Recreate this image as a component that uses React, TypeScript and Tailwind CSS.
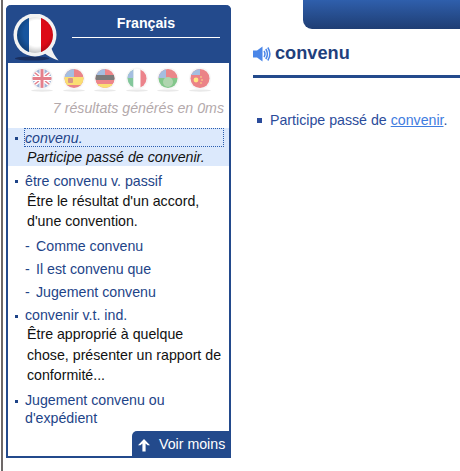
import React from 'react'

const FlagBall = ({ id, children }: { id: string; children: React.ReactNode }) => (
  <svg width="24" height="26" viewBox="0 0 24 26" className="opacity-55 blur-[0.6px]">
    <ellipse cx="12" cy="23.5" rx="11" ry="1.2" fill="#d8d8d8" />
    <clipPath id={id}>
      <circle cx="12" cy="11.5" r="9.5" />
    </clipPath>
    <circle cx="12" cy="11.5" r="11" fill="#f1f1f1" />
    <g clipPath={`url(#${id})`}>{children}</g>
  </svg>
)

const Flags = () => (
  <div className="flex justify-between pl-[22px] pr-[17px] pt-[4px]">
    <FlagBall id="uk">
      <rect width="24" height="24" fill="#5a7ab8" />
      <path d="M0 2 L24 21 M24 2 L0 21" stroke="#fff" strokeWidth="4" />
      <path d="M0 2 L24 21 M24 2 L0 21" stroke="#d0182c" strokeWidth="1.4" />
      <path d="M12 0 V24 M0 11.5 H24" stroke="#fff" strokeWidth="5" />
      <path d="M12 0 V24 M0 11.5 H24" stroke="#d0182c" strokeWidth="3" />
    </FlagBall>
    <FlagBall id="es">
      <rect width="24" height="24" fill="#d92027" />
      <rect x="0" y="0" width="12" height="10" fill="#5a8ac8" />
      <rect y="10" width="24" height="8" fill="#f6c400" />
      <rect x="6" y="11" width="5" height="5" rx="1" fill="#b5402a" />
    </FlagBall>
    <FlagBall id="de">
      <rect width="24" height="24" fill="#e0242b" />
      <rect x="0" y="0" width="12" height="8" fill="#5a8ac8" />
      <rect y="8" width="24" height="5" fill="#111" />
      <rect y="13" width="24" height="4" fill="#e0242b" />
      <rect y="17" width="24" height="7" fill="#f7c600" />
    </FlagBall>
    <FlagBall id="it">
      <rect width="8.5" height="24" fill="#1f9a4a" />
      <rect x="0" y="0" width="8.5" height="11" fill="#5a8ac8" />
      <rect x="8.5" width="7" height="24" fill="#fff" />
      <rect x="15.5" width="9" height="24" fill="#dd1f2d" />
    </FlagBall>
    <FlagBall id="ar">
      <rect width="24" height="11" fill="#d9262c" />
      <rect x="0" y="0" width="10" height="11" fill="#5a8ac8" />
      <rect y="11" width="24" height="13" fill="#1e9a2d" />
      <circle cx="12" cy="15" r="5" fill="#6fb46f" />
    </FlagBall>
    <FlagBall id="cn">
      <rect width="24" height="24" fill="#dc1f26" />
      <rect x="0" y="0" width="12" height="8" fill="#5a8ac8" />
      <circle cx="8" cy="13" r="2.4" fill="#ffd21f" />
      <circle cx="13" cy="10" r="0.8" fill="#ffd21f" />
      <circle cx="14" cy="13" r="0.8" fill="#ffd21f" />
      <circle cx="13" cy="16" r="0.8" fill="#ffd21f" />
    </FlagBall>
  </div>
)

const Bubble = () => (
  <svg width="48" height="50" viewBox="0 0 48 50" className="shrink-0">
    <defs>
      <clipPath id="fr">
        <circle cx="23" cy="21" r="18" />
      </clipPath>
      <radialGradient id="shade" cx="0.55" cy="0.45" r="0.6">
        <stop offset="0.6" stopColor="#000" stopOpacity="0" />
        <stop offset="1" stopColor="#000" stopOpacity="0.28" />
      </radialGradient>
    </defs>
    <ellipse cx="20" cy="44.5" rx="17" ry="2" fill="#1a2f5e" />
    <path d="M31 38 Q38 44 46.5 46.5 Q41 40 39 33 Z" fill="#f2f2f2" />
    <circle cx="23" cy="21" r="21.5" fill="#f2f2f2" />
    <g clipPath="url(#fr)">
      <rect x="4" y="2" width="13" height="38" fill="#17559e" />
      <rect x="17" y="2" width="12" height="38" fill="#fff" />
      <rect x="29" y="2" width="13" height="38" fill="#dd0a17" />
      <circle cx="23" cy="21" r="18" fill="url(#shade)" />
    </g>
  </svg>
)

const Sidebar = () => (
  <aside
    className="relative mt-[5px] ml-[3px] w-[225px] h-[453px] shrink-0 rounded-t-[5px] border-x-2 border-b-2 border-[#234a8c] bg-white"
  >
    <header className="flex h-[58px] -mx-[2px] rounded-t-[5px] bg-[#234a8c] pl-[6px] pt-[9px]">
      <Bubble />
      <div className="ml-[12px] w-[148px]">
        <h2 className="mt-[-2px] h-[22px] text-center text-[14.2px] leading-[22px] font-bold text-white">Français</h2>
        <div className="mt-[3px] h-px bg-white" />
      </div>
    </header>

    <Flags />
    <p className="mt-[5px] pr-[5px] text-right text-[14.2px] leading-[20px] italic text-[#b3a9ab]">7 résultats générés en 0ms</p>

    <ul className="mt-[10px] text-[14.2px] text-[#1e4488]">
      <li className="relative h-[38px] bg-[#dce9fc] pl-[16px]">
        <span className="absolute left-[7px] top-[9px] size-[3px] bg-[#1e4488]" />
        <div className="h-[19px] w-[200px] border border-dotted border-[#2a5db0] leading-[18px] italic">convenu.</div>
        <div className="pl-[3px] leading-[20px] italic text-[#111]">Participe passé de convenir.</div>
      </li>
      <li className="relative mt-[5px] pl-[17px]">
        <span className="absolute left-[7px] top-[9px] size-[3px] bg-[#1e4488]" />
        <div className="leading-[20px]">être convenu v. passif</div>
        <div className="pl-[2px] leading-[20px] text-[#111]">
          Être le résultat d'un accord,
          <br />
          d'une convention.
        </div>
      </li>
      <li className="mt-[4px] flex flex-col pl-[17px] leading-[23px]">
        {['Comme convenu', 'Il est convenu que', 'Jugement convenu'].map((s) => (
          <div key={s} className="flex">
            <span className="w-[11px]">-</span>
            {s}
          </div>
        ))}
      </li>
      <li className="relative mt-[2px] pl-[17px] leading-[20px]">
        <span className="absolute left-[7px] top-[9px] size-[3px] bg-[#1e4488]" />
        <div className="h-[18px] leading-[19px]">convenir v.t. ind.</div>
        <div className="pl-[2px] leading-[20.5px] text-[#111]">
          Être approprié à quelque
          <br />
          chose, présenter un rapport de
          <br />
          conformité...
        </div>
      </li>
      <li className="relative mt-[5px] pl-[17px] leading-[18px]">
        <span className="absolute left-[7px] top-[9px] size-[3px] bg-[#1e4488]" />
        Jugement convenu ou
        <br />
        d'expédient
      </li>
    </ul>

    <button className="absolute -right-[2px] -bottom-[2px] flex h-[27px] w-[99px] items-center rounded-tl-[5px] bg-[#234a8c] pl-[5px] text-[14.2px] text-white">
      <svg width="14" height="14" viewBox="0 0 14 14" className="mr-[8px]">
        <path d="M7 1 L13 7.2 L10.6 7.2 L8.6 5.4 L8.6 13.5 L5.4 13.5 L5.4 5.4 L3.4 7.2 L1 7.2 Z" fill="#fff" />
      </svg>
      Voir moins
    </button>
  </aside>
)

const Main = () => (
  <main className="ml-[22px] flex-1">
    <div className="ml-[50px] h-[29px] rounded-bl-[9px] bg-gradient-to-b from-[#2f5fac] to-[#1f3e74]" />
    <div className="mt-[14px] flex h-[22px] items-center">
      <svg width="18" height="16" viewBox="0 0 18 16" fill="none">
        <path d="M0 4.5 H4 L9.5 0.5 V15.5 L4 11.5 H0 Z" fill="#4a86e8" />
        <path d="M11 5 Q13 8 11 11 M12.8 3 Q16 8 12.8 13 M14.8 1.5 Q19 8 14.8 14.5" stroke="#4a86e8" strokeWidth="1.5" />
      </svg>
      <h1 className="ml-[4px] text-[18.2px] font-bold text-[#1f3f7d]">convenu</h1>
    </div>
    <div className="mt-[10px] h-[3px] bg-[#234a8c]" />
    <ul className="mt-[32px] pl-[4px] text-[14.2px] leading-[20px] text-[#2b4c9b]">
      <li className="flex items-center">
        <span className="mr-[8px] size-[5px] bg-[#2b4c9b]" />
        <span>
          Participe passé de <a className="text-[#3f7de0] underline">convenir</a>.
        </span>
      </li>
    </ul>
  </main>
)

const App = () => (
  <div className="ml-px flex h-[471px] w-[459px] overflow-hidden border-l-2 border-[#6d6868] bg-white font-['Liberation_Sans',Arial,sans-serif]">
    <Sidebar />
    <Main />
  </div>
)

export default App
